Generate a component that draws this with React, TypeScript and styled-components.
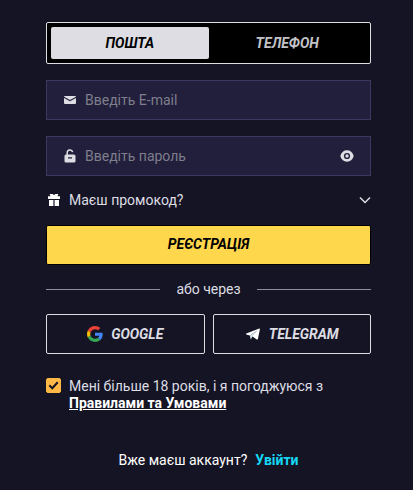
import React, { useState } from "react";
import styled, { createGlobalStyle } from "styled-components";

const GlobalStyle = createGlobalStyle`
  *, *::before, *::after { box-sizing: border-box; }
  body {
    margin: 0;
    min-height: 100vh;
    background: #151424;
    color: #dddde3;
    font-family: Roboto, "Liberation Sans", sans-serif;
    font-size: 14px;
    line-height: 18px;
  }
  button, input { font: inherit; }
`;

const Form = styled.form`
  display: flex;
  flex-direction: column;
  padding: 22px 42px 20px 46px;
`;

const Tabs = styled.div`
  display: grid;
  grid-template-columns: 1fr 1fr;
  height: 42px;
  padding: 4px;
  margin-bottom: 16px;
  background: #000;
  border: 1px solid #dddde3;
  border-radius: 2px;
`;

const Tab = styled.button<{ $active: boolean }>`
  padding: 0;
  border: 0;
  border-radius: 2px;
  background: ${(p) => (p.$active ? "#dddde3" : "transparent")};
  color: ${(p) => (p.$active ? "#000" : "#c3c3c8")};
  font-weight: 700;
  font-style: italic;
  cursor: pointer;
`;

const Fields = styled.div`
  display: flex;
  flex-direction: column;
  gap: 16px;
`;

const Field = styled.label`
  display: flex;
  align-items: center;
  height: 40px;
  padding: 0 16px;
  background: #211f3b;
  border: 1px solid #3b3963;
  color: #dddde3;
`;

const Input = styled.input`
  flex: 1;
  min-width: 0;
  margin-left: 8px;
  padding: 0;
  border: 0;
  outline: 0;
  background: transparent;
  color: #dddde3;
  &::placeholder { color: #7f7e8d; opacity: 1; }
`;

const IconButton = styled.button`
  display: flex;
  padding: 0;
  border: 0;
  background: transparent;
  color: inherit;
  cursor: pointer;
`;

const Promo = styled.button`
  display: flex;
  align-items: center;
  height: 48px;
  margin-bottom: 1px;
  padding: 0;
  border: 0;
  background: transparent;
  color: #dddde3;
  text-align: left;
  cursor: pointer;
`;

const PromoText = styled.span`
  flex: 1;
  margin-left: 8px;
`;

const Submit = styled.button`
  height: 40px;
  padding: 0 0 2px;
  border: 1px solid #000;
  border-radius: 2px;
  background: #ffd74d;
  color: #000;
  font-weight: 700;
  font-style: italic;
  cursor: pointer;
`;

const Divider = styled.div`
  display: flex;
  align-items: center;
  gap: 16px;
  height: 48px;
  margin-bottom: 1px;
  &::before, &::after {
    content: "";
    flex: 1;
    height: 1px;
    background: #8d8c97;
  }
`;

const Socials = styled.div`
  display: grid;
  grid-template-columns: 1fr 1fr;
  gap: 8px;
`;

const SocialButton = styled.button`
  display: flex;
  align-items: center;
  justify-content: center;
  gap: 8px;
  height: 40px;
  padding: 0;
  border: 1px solid #dddde3;
  border-radius: 2px;
  background: transparent;
  color: #dddde3;
  font-weight: 700;
  font-style: italic;
  cursor: pointer;
`;

const Terms = styled.div`
  display: flex;
  align-items: flex-start;
  gap: 8px;
  margin-top: 24px;
  line-height: 17px;
`;

const CheckWrap = styled.span`
  display: grid;
  color: #151424;
  & > * { grid-area: 1 / 1; }
  & > svg { pointer-events: none; }
`;

const Checkbox = styled.input`
  appearance: none;
  width: 15px;
  height: 15px;
  margin: 0;
  border: 1px solid #ffb845;
  border-radius: 2px;
  cursor: pointer;
  &:checked { background: #ffb845; }
`;

const TermsLink = styled.a`
  color: #fff;
  font-weight: 700;
`;

const Footer = styled.p`
  display: flex;
  justify-content: center;
  gap: 8px;
  margin: 39px 0 0;
  color: #fff;
`;

const LoginLink = styled.a`
  color: #14d8f5;
  font-weight: 700;
  text-decoration: none;
`;

const MailIcon = () => (
  <svg width="14" height="14" viewBox="0 0 14 14" fill="currentColor" aria-hidden="true">
    <path d="M2 3h10q.9 0 1 .7L7 7 1 3.700Q1.200 3 2 3Z" />
    <path d="M1 5.100 7 8.300 13 5.100V10q0 1-1 1H2q-1 0-1-1Z" />
  </svg>
);

const LockIcon = () => (
  <svg width="14" height="14" viewBox="0 0 14 14" aria-hidden="true">
    <path d="M4.200 6V3.800a2.800 2.800 0 0 1 5.500-.7" fill="none" stroke="currentColor" strokeWidth="1.500" />
    <path
      fill="currentColor"
      fillRule="evenodd"
      d="M3 5.500h8q1.500 0 1.500 1.500v5q0 1.500-1.500 1.500H3Q1.500 13.500 1.500 12V7q0-1.500 1.500-1.500ZM5 8.200v1.300h4V8.200Z"
    />
  </svg>
);

const EyeIcon = () => (
  <svg width="14" height="14" viewBox="0 0 14 14" aria-hidden="true">
    <path
      fill="currentColor"
      fillRule="evenodd"
      d="M7 1.300C3.800 1.300 1.300 3.300.3 7c1 3.700 3.500 5.700 6.700 5.700s5.700-2 6.700-5.700C12.700 3.300 10.200 1.300 7 1.300ZM7 3.900a3.100 3.100 0 1 1 0 6.200 3.100 3.100 0 0 1 0-6.200Z"
    />
    <circle cx="7" cy="7" r="1.700" fill="currentColor" />
  </svg>
);

const GiftIcon = () => (
  <svg width="15" height="14" viewBox="0 0 15 14" fill="#fff" aria-hidden="true">
    <path d="M2 3.200h2.300V2.200L3.800 2V1h2.700L8 2l1.500-1h2.700v1l-.5.200v1H14V6H2Z" />
    <path d="M3 7h4.400v6H3ZM8.600 7H13v6H8.600Z" />
  </svg>
);

const ChevronIcon = () => (
  <svg width="12" height="8" viewBox="0 0 12 8" fill="none" stroke="currentColor" strokeWidth="1.500" aria-hidden="true">
    <path d="m1 1.500 5 5 5-5" />
  </svg>
);

const GoogleIcon = () => (
  <svg width="16" height="16" viewBox="0 0 48 48" aria-hidden="true">
    <path fill="#ea4335" d="M24 9.500c3.540 0 6.710 1.220 9.210 3.600l6.850-6.850C35.900 2.380 30.470 0 24 0 14.620 0 6.510 5.380 2.560 13.220l7.980 6.190C12.430 13.720 17.740 9.500 24 9.500z" />
    <path fill="#4285f4" d="M46.980 24.550c0-1.570-.15-3.090-.38-4.550H24v9.020h12.940c-.58 2.960-2.260 5.480-4.780 7.180l7.730 6c4.510-4.180 7.090-10.360 7.090-17.650z" />
    <path fill="#fbbc05" d="M10.530 28.590c-.48-1.450-.76-2.990-.76-4.590s.27-3.140.76-4.590l-7.980-6.190C.92 16.460 0 20.120 0 24s.92 7.540 2.560 10.780l7.970-6.190z" />
    <path fill="#34a853" d="M24 48c6.480 0 11.930-2.130 15.890-5.810l-7.730-6c-2.150 1.450-4.920 2.300-8.160 2.300-6.260 0-11.570-4.220-13.470-9.910l-7.980 6.190C6.510 42.620 14.620 48 24 48z" />
  </svg>
);

const TelegramIcon = () => (
  <svg width="16" height="16" viewBox="0 0 16 16" aria-hidden="true">
    <path fill="#fff" d="M14.300 2.600 1.300 7.600q-.9.500 0 .9l3.500 1.100L12.400 4.500 6.800 10l5 3.400q.9.400 1.100-.5L14.900 3.200q0-.8-.6-.6Z" />
    <path fill="#d3e4ee" d="M4.800 9.500 12.400 4.500 7.600 10.200l-1.800 3.200Z" />
  </svg>
);

const CheckIcon = () => (
  <svg width="15" height="15" viewBox="0 0 15 15" fill="none" stroke="currentColor" strokeWidth="2" aria-hidden="true">
    <path d="m3.300 7.200 3 3 5.400-5.900" />
  </svg>
);

export default function App() {
  const [tab, setTab] = useState<"mail" | "phone">("mail");
  const [agreed, setAgreed] = useState(true);
  const [visible, setVisible] = useState(false);

  return (
    <>
      <GlobalStyle />
      <Form onSubmit={(e) => e.preventDefault()}>
        <Tabs>
          <Tab type="button" $active={tab === "mail"} aria-pressed={tab === "mail"} onClick={() => setTab("mail")}>
            ПОШТА
          </Tab>
          <Tab type="button" $active={tab === "phone"} aria-pressed={tab === "phone"} onClick={() => setTab("phone")}>
            ТЕЛЕФОН
          </Tab>
        </Tabs>
        <Fields>
          <Field>
            <MailIcon />
            <Input type="email" placeholder="Введіть E-mail" aria-label="E-mail" />
          </Field>
          <Field>
            <LockIcon />
            <Input type={visible ? "text" : "password"} placeholder="Введіть пароль" aria-label="Пароль" />
            <IconButton type="button" aria-label="Показати пароль" onClick={() => setVisible(!visible)}>
              <EyeIcon />
            </IconButton>
          </Field>
        </Fields>
        <Promo type="button">
          <GiftIcon />
          <PromoText>Маєш промокод?</PromoText>
          <ChevronIcon />
        </Promo>
        <Submit type="submit">РЕЄСТРАЦІЯ</Submit>
        <Divider>або через</Divider>
        <Socials>
          <SocialButton type="button">
            <GoogleIcon />
            GOOGLE
          </SocialButton>
          <SocialButton type="button">
            <TelegramIcon />
            TELEGRAM
          </SocialButton>
        </Socials>
        <Terms>
          <CheckWrap>
            <Checkbox id="terms" type="checkbox" checked={agreed} onChange={(e) => setAgreed(e.target.checked)} />
            {agreed && <CheckIcon />}
          </CheckWrap>
          <label htmlFor="terms">
            Мені більше 18 років, і я погоджуюся з <TermsLink href="#terms">Правилами та Умовами</TermsLink>
          </label>
        </Terms>
        <Footer>
          Вже маєш аккаунт? <LoginLink href="#login">Увійти</LoginLink>
        </Footer>
      </Form>
    </>
  );
}
